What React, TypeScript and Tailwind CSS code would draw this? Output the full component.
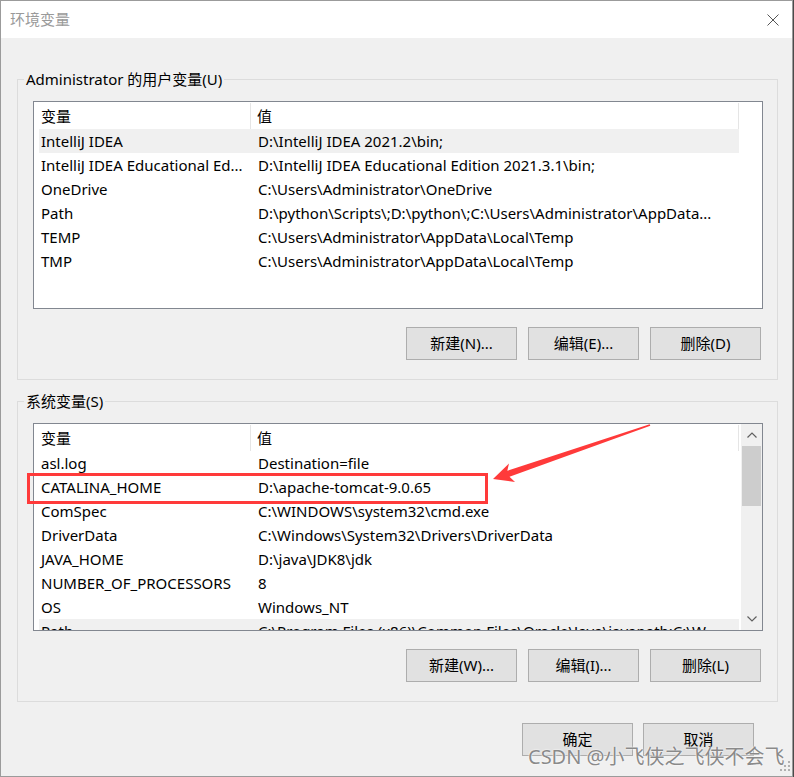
import React from "react";

type Row = { name: string; value: string };

const userRows: Row[] = [
  { name: "IntelliJ IDEA", value: "D:\\IntelliJ IDEA 2021.2\\bin;" },
  { name: "IntelliJ IDEA Educational Ed...", value: "D:\\IntelliJ IDEA Educational Edition 2021.3.1\\bin;" },
  { name: "OneDrive", value: "C:\\Users\\Administrator\\OneDrive" },
  { name: "Path", value: "D:\\python\\Scripts\\;D:\\python\\;C:\\Users\\Administrator\\AppData..." },
  { name: "TEMP", value: "C:\\Users\\Administrator\\AppData\\Local\\Temp" },
  { name: "TMP", value: "C:\\Users\\Administrator\\AppData\\Local\\Temp" },
];

const systemRows: Row[] = [
  { name: "asl.log", value: "Destination=file" },
  { name: "CATALINA_HOME", value: "D:\\apache-tomcat-9.0.65" },
  { name: "ComSpec", value: "C:\\WINDOWS\\system32\\cmd.exe" },
  { name: "DriverData", value: "C:\\Windows\\System32\\Drivers\\DriverData" },
  { name: "JAVA_HOME", value: "D:\\java\\JDK8\\jdk" },
  { name: "NUMBER_OF_PROCESSORS", value: "8" },
  { name: "OS", value: "Windows_NT" },
  { name: "Path", value: "C:\\Program Files (x86)\\Common Files\\Oracle\\Java\\javapath;C:\\W..." },
];

// thin chevron used by the scrollbar buttons
const Chevron = ({ up }: { up?: boolean }) => (
  <svg width="10" height="6" viewBox="0 0 10 6" className="block">
    <path
      d={up ? "M0.5 5.5 L5 1 L9.5 5.5" : "M0.5 0.5 L5 5 L9.5 0.5"}
      fill="none"
      stroke="#606060"
      strokeWidth="1.2"
    />
  </svg>
);

const ListView = ({
  rows,
  highlight,
  scroll = false,
}: {
  rows: Row[];
  highlight: number;
  scroll?: boolean;
}) => (
  <div className="h-[208px] w-[730px] border border-[#828790] bg-white flex overflow-hidden">
    <div className="flex-1 overflow-hidden pl-[5px]">
      {/* column header */}
      <div className="h-[27px] w-[700px] flex pt-[1px]">
        <div className="w-[212px] h-full flex items-center pl-[2px] border-r border-[#e5e5e5]">变量</div>
        <div className="flex-1 h-full flex items-center pl-[6px] border-r border-[#e5e5e5]">值</div>
      </div>
      {rows.map((r, i) => (
        <div
          key={r.name + i}
          className={`h-[24px] w-[700px] flex items-center whitespace-nowrap ${
            i === highlight ? "bg-[#f0f0f0]" : ""
          }`}
        >
          <div className="w-[212px] pl-[2px] overflow-hidden">{r.name}</div>
          <div className="flex-1 pl-[7px] overflow-hidden">{r.value}</div>
        </div>
      ))}
    </div>
    {scroll ? (
      <div className="w-[21px] h-full bg-[#f0f0f0] flex flex-col">
        <div className="h-[22px] flex items-center justify-center">
          <Chevron up />
        </div>
        <div className="h-[60px] mx-[1px] bg-[#cdcdcd]" />
        <div className="flex-1" />
        <div className="h-[22px] flex items-center justify-center">
          <Chevron />
        </div>
      </div>
    ) : null}
  </div>
);

const Button = ({ label }: { label: string }) => (
  <button className="w-[111px] h-[33px] border border-[#adadad] bg-[#e1e1e1] text-[15px] text-black leading-none">
    {label}
  </button>
);

const Group = ({
  title,
  children,
  buttons,
}: {
  title: string;
  children: React.ReactNode;
  buttons: string[];
}) => (
  <fieldset className="border border-[#dcdcdc] p-0 m-0">
    <legend className="ml-[6px] px-[2px] leading-[20px] text-[15px]">{title}</legend>
    <div className="pl-[15px] pr-[14px] pt-[12px] pb-[19px]">
      {children}
      <div className="mt-[18px] flex justify-end gap-[11px] pr-[2px]">
        {buttons.map((b) => (
          <Button key={b} label={b} />
        ))}
      </div>
    </div>
  </fieldset>
);

export default function App() {
  return (
    <div className="w-[794px] h-[777px] bg-[#4a4a4a] relative overflow-hidden font-['Noto_Sans','Noto_Sans_CJK_SC',sans-serif] text-[15px] text-black">
      <div className="w-[793px] h-[777px] border border-[#9b9b9b] bg-[#f0f0f0] flex flex-col">
        {/* title bar */}
        <div className="h-[37px] bg-white flex items-center justify-between pl-[9px] pr-[13px]">
          <span className="text-[15px] text-[#9a9a9a]">环境变量</span>
          <svg width="12" height="12" viewBox="0 0 12 12">
            <path d="M0.5 0.5 L11.5 11.5 M11.5 0.5 L0.5 11.5" stroke="#555" strokeWidth="1" />
          </svg>
        </div>

        <div className="pl-[16px] pr-[14px] pt-[31px] flex flex-col gap-[11px]">
          <Group title="Administrator 的用户变量(U)" buttons={["新建(N)...", "编辑(E)...", "删除(D)"]}>
            <ListView rows={userRows} highlight={0} />
          </Group>
          <Group title="系统变量(S)" buttons={["新建(W)...", "编辑(I)...", "删除(L)"]}>
            <ListView rows={systemRows} highlight={7} scroll />
          </Group>
        </div>

        <div className="mt-[21px] flex justify-end gap-[10px] pr-[38px]">
          <Button label="确定" />
          <Button label="取消" />
        </div>
      </div>

      {/* red annotation box + arrow */}
      <div className="absolute left-[27px] top-[473px] w-[461px] h-[31px] border-[3px] border-[#ff3a3a]" />
      <svg className="absolute left-0 top-0" width="794" height="777" viewBox="0 0 794 777">
        <polygon
          points="493,479 515,482 509.5,476.8 650.3,425.8 649.7,424.2 507.3,470.8 509,463.5"
          fill="#ff3a3a"
        />
      </svg>

      {/* watermark */}
      <div className="absolute left-[528px] top-[744px] leading-[26px] text-[20px] text-[#8a8a8a] whitespace-nowrap [text-shadow:0_0_2px_#fff,0_0_1px_#fff]">
        CSDN @小飞侠之飞侠不会飞
      </div>
      <svg className="absolute left-[780px] top-[761px]" width="12" height="12" viewBox="0 0 12 12">
        <g fill="#b0b0b0">
          <rect x="8" y="0" width="2" height="2" />
          <rect x="4" y="4" width="2" height="2" />
          <rect x="8" y="4" width="2" height="2" />
          <rect x="0" y="8" width="2" height="2" />
          <rect x="4" y="8" width="2" height="2" />
          <rect x="8" y="8" width="2" height="2" />
        </g>
      </svg>
    </div>
  );
}
